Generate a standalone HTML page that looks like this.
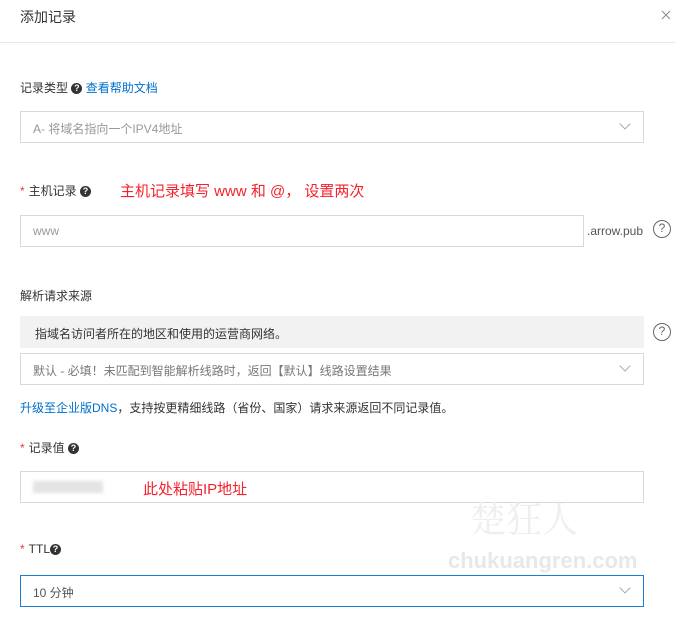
<!DOCTYPE html>
<html><head><meta charset="utf-8"><style>
*{margin:0;padding:0;box-sizing:border-box}
body{width:675px;height:618px;background:#fff;font-family:"Liberation Sans","Noto Sans CJK SC",sans-serif;font-size:12px;color:#333;position:relative;overflow:hidden}
.a{position:absolute;white-space:nowrap}
.box{position:absolute;left:20px;width:624px;height:32px;border:1px solid #d9d9d9;background:#fff}
.q{display:inline-block;width:11px;height:11px;border-radius:50%;background:#333;color:#fff;font-size:9px;line-height:11px;text-align:center;font-weight:bold;vertical-align:1px}
.qc{position:absolute;width:18px;height:18px;border:1.5px solid #666;border-radius:50%;color:#666;font-size:12px;line-height:15px;text-align:center}
.star{color:#e4393c;margin-right:4px}
.chev{position:absolute;right:14px;top:8px;width:8px;height:8px;border-right:1px solid #aaa;border-bottom:1px solid #aaa;transform:rotate(45deg)}
.red{color:#f5222d;font-size:15px}
</style></head><body>
<div class="a" style="left:20px;top:7px;font-size:14px;color:#333">添加记录</div>
<svg class="a" style="left:661px;top:10px" width="10" height="10"><path d="M1 1L9 9M9 1L1 9" stroke="#888" stroke-width="1"/></svg>
<div class="a" style="left:0;top:42px;width:675px;height:1px;background:#e8e8e8"></div>

<div class="a" style="left:20px;top:79px">记录类型 <span class="q">?</span> <span style="color:#0070cc">查看帮助文档</span></div>
<div class="box" style="top:111px"><span class="a" style="left:12px;top:8px;color:#999">A- 将域名指向一个IPV4地址</span><i class="chev"></i></div>

<div class="a" style="left:20px;top:182px"><span class="star">*</span>主机记录 <span class="q">?</span></div>
<div class="a red" style="left:120px;top:180px">主机记录填写 www 和 @， 设置两次</div>
<div class="box" style="top:215px;width:564px"><span class="a" style="left:12px;top:8px;color:#999">www</span></div>
<div class="a" style="left:587px;top:224px;color:#555">.arrow.pub</div>
<div class="qc" style="left:653px;top:220px">?</div>

<div class="a" style="left:20px;top:287px">解析请求来源</div>
<div class="a" style="left:20px;top:316px;width:624px;height:32px;background:#f2f2f2"><span class="a" style="left:15px;top:9px">指域名访问者所在的地区和使用的运营商网络。</span></div>
<div class="qc" style="left:653px;top:323px">?</div>
<div class="box" style="top:353px"><span class="a" style="left:12px;top:8px;color:#777">默认 - 必填！未匹配到智能解析线路时，返回【默认】线路设置结果</span><i class="chev"></i></div>
<div class="a" style="left:20px;top:399px"><span style="color:#0070cc">升级至企业版DNS</span>，支持按更精细线路（省份、国家）请求来源返回不同记录值。</div>

<div class="a" style="left:20px;top:439px"><span class="star">*</span>记录值 <span class="q">?</span></div>
<div class="box" style="top:471px"><span class="a" style="left:12px;top:9px;width:70px;height:12px;background:#e4e4e4;filter:blur(1.5px)"></span><span class="a red" style="left:122px;top:6px">此处粘贴IP地址</span></div>

<div class="a" style="left:470px;top:492px;font-size:36px;color:#eee;font-family:'Noto Serif CJK SC',serif">楚狂人</div>
<div class="a" style="left:448px;top:548px;font-size:22px;color:#e8e8e8;font-weight:bold">chukuangren.com</div>

<div class="a" style="left:20px;top:542px"><span class="star">*</span>TTL<span class="q">?</span></div>
<div class="box" style="top:575px;border-color:#1a7fd4"><span class="a" style="left:12px;top:8px;color:#555">10 分钟</span><i class="chev"></i></div>
</body></html>
